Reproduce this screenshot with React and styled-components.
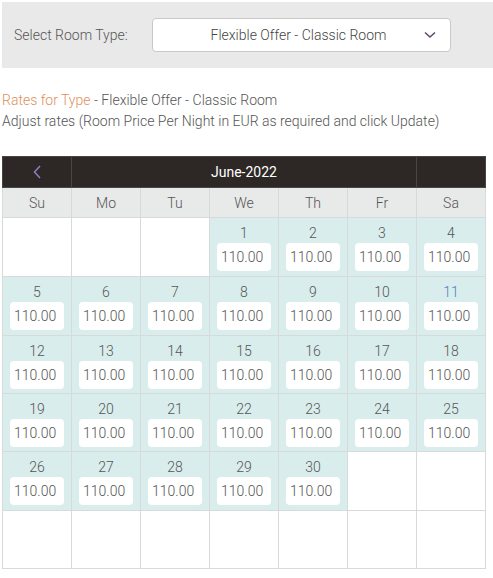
import React from "react";
import styled, { createGlobalStyle } from "styled-components";

const GlobalStyle = createGlobalStyle`
  body {
    margin: 0;
    background: #fff;
    font-family: Roboto, "Liberation Sans", sans-serif;
    font-weight: 300;
  }
`;

const Page = styled.div`
  padding: 2px 0 0 2px;
  width: 491px;
`;

const Toolbar = styled.div`
  background: #e9e9e9;
  height: 66px;
  display: flex;
  align-items: center;
  padding-left: 12px;
`;

const Label = styled.span`
  font-size: 14px;
  color: #555;
  width: 138px;
`;

const Select = styled.div`
  width: 297px;
  height: 32px;
  background: #fff;
  border: 1px solid #c9c9c9;
  border-radius: 4px;
  display: flex;
  align-items: center;
  position: relative;
  font-size: 14px;
  color: #444;
  span {
    flex: 1;
    text-align: center;
    padding-right: 6px;
  }
  svg {
    position: absolute;
    right: 14px;
    top: 12px;
  }
`;

const Info = styled.div`
  margin-top: 22px;
  font-size: 14px;
  line-height: 21px;
  color: #555;
`;

const Accent = styled.span`
  color: #e0905a;
`;

const Table = styled.table`
  margin-top: 24px;
  border-collapse: collapse;
  table-layout: fixed;
  width: 484px;
  font-size: 14px;
  color: #555;
  td, th {
    border: 1px solid #d6dada;
    padding: 0;
  }
`;

const HeadRow = styled.tr`
  background: #2d2826;
  height: 31px;
  th {
    border-color: #4a4442;
    font-weight: 400;
    color: #fff;
  }
  svg {
    display: block;
    margin: 0 auto;
  }
`;

const DayNames = styled.tr`
  background: #e8e9e9;
  height: 30px;
  th {
    font-weight: 300;
    color: #555;
  }
`;

const Week = styled.tr`
  height: ${(p) => (p.$tall ? 59 : 58)}px;
`;

const Cell = styled.td`
  background: ${(p) => (p.$active ? "#d9eded" : "#fff")};
  vertical-align: top;
  text-align: center;
`;

const DayNum = styled.div`
  padding-top: 5px;
  line-height: 20px;
  color: ${(p) => (p.$highlight ? "#4a7fc4" : "#555")};
`;

const RateBox = styled.div`
  margin: 0 7px;
  height: 28px;
  background: #fff;
  border-radius: 4px;
  text-align: left;
  padding-left: 4px;
  line-height: 28px;
  color: #555;
`;

const names = ["Su", "Mo", "Tu", "We", "Th", "Fr", "Sa"];

const weeks = [];
{
  const cells = [null, null, null];
  for (let d = 1; d <= 30; d++) cells.push(d);
  while (cells.length < 42) cells.push(null);
  for (let i = 0; i < 6; i++) weeks.push(cells.slice(i * 7, i * 7 + 7));
}

export default function App() {
  return (
    <Page>
      <GlobalStyle />
      <Toolbar>
        <Label>Select Room Type:</Label>
        <Select>
          <span>Flexible Offer - Classic Room</span>
          <svg width="12" height="8" viewBox="0 0 12 8">
            <path d="M1 1.5 L6 6 L11 1.5" fill="none" stroke="#5e4a6e" strokeWidth="1.6" />
          </svg>
        </Select>
      </Toolbar>
      <Info>
        <div>
          <Accent>Rates for Type</Accent> - Flexible Offer - Classic Room
        </div>
        <div>Adjust rates (Room Price Per Night in EUR as required and click Update)</div>
      </Info>
      <Table>
        <thead>
          <HeadRow>
            <th>
              <svg width="8" height="14" viewBox="0 0 8 14">
                <path d="M7 1 L1.5 7 L7 13" fill="none" stroke="#8f80c0" strokeWidth="1.5" />
              </svg>
            </th>
            <th colSpan={5}>June-2022</th>
            <th></th>
          </HeadRow>
          <DayNames>
            {names.map((n) => (
              <th key={n}>{n}</th>
            ))}
          </DayNames>
        </thead>
        <tbody>
          {weeks.map((w, i) => (
            <Week key={i} $tall={i === 0 || i === 1 || i === 4}>
              {w.map((d, j) =>
                d ? (
                  <Cell key={j} $active>
                    <DayNum $highlight={d === 11}>{d}</DayNum>
                    <RateBox>110.00</RateBox>
                  </Cell>
                ) : (
                  <Cell key={j} />
                )
              )}
            </Week>
          ))}
        </tbody>
      </Table>
    </Page>
  );
}
